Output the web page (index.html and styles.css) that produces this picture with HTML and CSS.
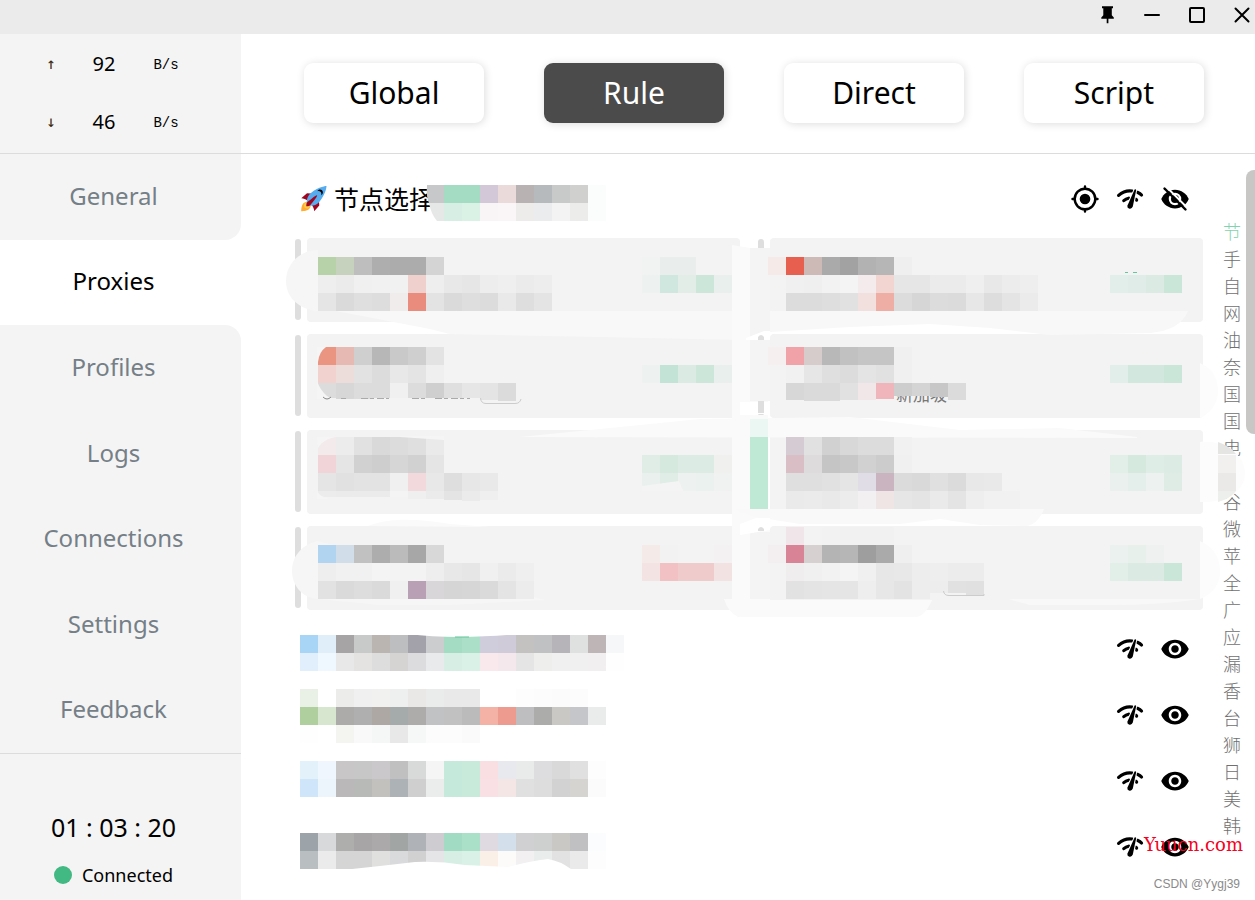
FILE: index.html
```html
<!DOCTYPE html>
<html lang="zh-CN">
<head>
    <meta charset="UTF-8">
    <title>Proxies</title>
    <link rel="stylesheet" href="styles.css">
</head>
<body>
    <svg class="symbols" aria-hidden="true">
        <symbol id="icon-speed" viewBox="0 0 30 30">
            <g fill="none" stroke="currentColor" stroke-width="3.2" stroke-linecap="round">
                <path d="M3.6 11.4C7.4 8 12.4 6.2 17.2 7"/>
                <path d="M22.4 8.3C24 9 25.5 9.8 26.5 11"/>
                <path d="M8.8 16.6C10.4 15.2 12 14.5 13.6 14.2"/>
                <path d="M20.8 15.2L21.6 16"/>
            </g>
            <path d="M19.4 5.2L12.8 20" stroke="#fff" stroke-width="1.4"/>
            <path d="M21.6 5.2L18.8 20" stroke="#fff" stroke-width="1.4"/>
            <path d="M19.6 5.6Q20.6 4.6 21.2 6L17.8 22.6Q17 25 14.6 24.7Q12 24 12.5 21.4Z" fill="currentColor"/>
        </symbol>
        <symbol id="icon-eye" viewBox="0 0 24 24">
            <path fill="currentColor" d="M12 4.5C7 4.5 2.73 7.61 1 12c1.73 4.39 6 7.5 11 7.5s9.27-3.11 11-7.5c-1.73-4.39-6-7.5-11-7.5zM12 17c-2.76 0-5-2.24-5-5s2.24-5 5-5 5 2.24 5 5-2.24 5-5 5zm0-8c-1.66 0-3 1.34-3 3s1.34 3 3 3 3-1.34 3-3-1.34-3-3-3z"/>
        </symbol>
    </svg>

    <header class="titlebar">
        <button class="window-btn" aria-label="Pin">
            <svg viewBox="0 0 24 24"><path d="M7 3.2h11v2h-1.2v7l2 2.3v1.3h-5.4v4.4h-1.700v-4.400H6.300v-1.300l2-2.300v-7H7z"/></svg>
        </button>
        <button class="window-btn" aria-label="Minimize">
            <svg viewBox="0 0 24 24"><path class="line" d="M5 12h14"/></svg>
        </button>
        <button class="window-btn" aria-label="Maximize">
            <svg viewBox="0 0 24 24"><rect class="line" x="5" y="5" width="14" height="14" rx="1"/></svg>
        </button>
        <button class="window-btn" aria-label="Close">
            <svg viewBox="0 0 24 24"><path class="line" d="M5.500 5.500l13 13M18.500 5.500l-13 13"/></svg>
        </button>
    </header>

    <div class="app">
        <aside class="sidebar">
            <div class="traffic">
                <div class="traffic-row"><span class="arrow">↑</span><span class="speed">92</span><span class="unit">B/s</span></div>
                <div class="traffic-row"><span class="arrow">↓</span><span class="speed">46</span><span class="unit">B/s</span></div>
            </div>
            <nav class="menu">
                <a class="menu-item before-active" href="#general">General</a>
                <a class="menu-item active" href="#proxies">Proxies</a>
                <a class="menu-item after-active" href="#profiles">Profiles</a>
                <a class="menu-item" href="#logs">Logs</a>
                <a class="menu-item" href="#connections">Connections</a>
                <a class="menu-item" href="#settings">Settings</a>
                <a class="menu-item" href="#feedback">Feedback</a>
            </nav>
            <div class="status">
                <div class="uptime">01 : 03 : 20</div>
                <div class="connection"><span class="dot"></span>Connected</div>
            </div>
        </aside>

        <main class="main">
            <div class="modes">
                <button class="mode">Global</button>
                <button class="mode selected">Rule</button>
                <button class="mode">Direct</button>
                <button class="mode">Script</button>
            </div>

            <div class="content">
                <div class="groups">
                    <section class="group">
                        <div class="group-header first">
                            <h2 class="group-name">
                                <svg class="rocket" viewBox="0 0 36 36" aria-hidden="true">
                                    <path fill="#a0041e" d="M1 17l8-7 16 1 1 16-7 8s.001-5.999-6-12-12-6-12-6z"/>
                                    <path fill="#ffac33" d="M.973 35s-.036-7.979 2.985-11S15 21.187 15 21.187 14.999 29 11.999 32c-3 3-11.026 3-11.026 3z"/>
                                    <circle fill="#ffcc4d" cx="8.999" cy="27" r="4"/>
                                    <path fill="#55acee" d="M35.999 0s-10 0-22 10c-6 5-6 14-4 16s11 2 16-4c10-12 10-22 10-22z"/>
                                    <path d="M26.999 5c-1.623 0-3.013.971-3.641 2.360.502-.227 1.055-.360 1.641-.360 2.209 0 4 1.791 4 4 0 .586-.133 1.139-.359 1.640 1.389-.627 2.359-2.017 2.359-3.640 0-2.209-1.791-4-4-4z"/>
                                    <path fill="#a0041e" d="M8 28s0-4 1-5 13.001-10.999 14-10-9.001 13-10.001 14S8 28 8 28z"/>
                                </svg>
                                <span>节点选择</span>
                            </h2>
                            <div class="actions">
                                <button class="icon-btn" aria-label="Locate">
                                    <svg viewBox="0 0 30 30"><g fill="none" stroke="currentColor" stroke-width="2.400" stroke-linecap="round"><circle cx="15" cy="15" r="10.300"/><path d="M15 2.500v2M15 25.500v2M2.500 15h2M25.500 15h2"/></g><circle cx="15" cy="15" r="5.300"/></svg>
                                </button>
                                <button class="icon-btn" aria-label="Test speed"><svg><use href="#icon-speed"/></svg></button>
                                <button class="icon-btn" aria-label="Collapse">
                                    <svg viewBox="0 0 30 30">
                                        <g transform="scale(1.250)"><path d="M12 4.500C7 4.500 2.730 7.610 1 12c1.730 4.390 6 7.500 11 7.500s9.270-3.110 11-7.500c-1.730-4.390-6-7.500-11-7.500z"/><circle cx="12" cy="12" r="4.100" fill="none" stroke="#fff" stroke-width="1.800"/></g>
                                        <path d="M6 2.500l21 21" stroke="#fff" stroke-width="2"/>
                                        <path d="M4.500 4.500l21 21" stroke="currentColor" stroke-width="2.400" stroke-linecap="round"/>
                                    </svg>
                                </button>
                            </div>
                        </div>
                        <div class="nodes">
                            <div class="node"><button class="card" aria-label="Node 1"></button></div>
                            <div class="node"><button class="card" aria-label="Node 2"></button></div>
                            <div class="node"><button class="card" aria-label="Node 3"></button></div>
                            <div class="node"><button class="card" aria-label="Node 4"></button></div>
                            <div class="node"><button class="card" aria-label="Node 5"></button></div>
                            <div class="node"><button class="card" aria-label="Node 6"></button></div>
                            <div class="node"><button class="card" aria-label="Node 7"></button></div>
                            <div class="node"><button class="card" aria-label="Node 8"></button></div>
                        </div>
                    </section>
                    <section class="group-header">
                        <div class="actions">
                            <button class="icon-btn" aria-label="Test speed"><svg><use href="#icon-speed"/></svg></button>
                            <button class="icon-btn" aria-label="Expand"><svg><use href="#icon-eye"/></svg></button>
                        </div>
                    </section>
                    <section class="group-header">
                        <div class="actions">
                            <button class="icon-btn" aria-label="Test speed"><svg><use href="#icon-speed"/></svg></button>
                            <button class="icon-btn" aria-label="Expand"><svg><use href="#icon-eye"/></svg></button>
                        </div>
                    </section>
                    <section class="group-header">
                        <div class="actions">
                            <button class="icon-btn" aria-label="Test speed"><svg><use href="#icon-speed"/></svg></button>
                            <button class="icon-btn" aria-label="Expand"><svg><use href="#icon-eye"/></svg></button>
                        </div>
                    </section>
                    <section class="group-header">
                        <div class="actions">
                            <button class="icon-btn" aria-label="Test speed"><svg><use href="#icon-speed"/></svg></button>
                            <button class="icon-btn" aria-label="Expand"><svg><use href="#icon-eye"/></svg></button>
                        </div>
                    </section>
                </div>
                <ul class="index">
                    <li class="current">节</li><li>手</li><li>自</li><li>网</li><li>油</li><li>奈</li><li>国</li><li>国</li><li>电</li><li></li><li>谷</li><li>微</li><li>苹</li><li>全</li><li>广</li><li>应</li><li>漏</li><li>香</li><li>台</li><li>狮</li><li>日</li><li>美</li><li>韩</li>
                </ul>
                <div class="scrollbar"></div>
            </div>
        </main>
    </div>

    <!-- mosaic laid over the private node names -->
    <svg class="mosaic" width="1255" height="900" aria-hidden="true">
        <g>
            <path fill="#f6f6f6" d="M318 250C300 250 286 264 286 281C286 298 300 310 318 311Z"/>
            <path fill="#f8f8f8" d="M336 311H1188C1182 325 1170 331 1150 333L1050 335L990 328L930 324L850 327L770 332L740 340L600 337L450 334L430 329Z"/>
            <path fill="#f6f6f6" d="M318 541C300 545 292 558 292 571C292 585 302 598 318 599L380 605H450L545 600Z"/>
            <path fill="#fafafa" d="M368 526C390 517 420 519 450 524L490 527Z"/>
            <path fill="#fafafa" d="M520 437L700 419L850 417L960 430L1060 428L1137 437V438Z"/>
            <path fill="#fafafa" d="M732 245L750 248H768V402H740V415H768V528L732 536Z"/>
            <path fill="#f4f4f4" d="M750 248H770V401H750Z"/>
            <path fill="#f9f9f9" d="M732 509H1044Q1037 526 1025 526L980 525L940 519L900 524H800L755 517Z"/>
            <path fill="#fafafa" d="M732 535L770 530V600H932Q925 617 915 617H738Q728 612 724 599H732Z"/>
            <path fill="#f4f4f4" d="M750 532H770V599H750Z"/>
            <path fill="#f8f8f8" d="M1008 599H1200Q1160 605 1110 605H1030Z"/>
            <path fill="#fcfcfc" d="M1200 363C1213 369 1218 379 1218 391C1218 403 1211 413 1200 418ZM1200 442C1224 440 1245 454 1245 473C1245 490 1228 503 1200 502ZM1200 541C1214 547 1220 558 1220 571C1220 584 1213 594 1200 599Z"/>
            <path fill="#fff" d="M740 402H770V414H740ZM746 338L764 331H770V340H746ZM740 524L756 518H770V530L740 535Z"/>
            <path fill="#dedede" d="M758 401H764V413H758ZM758 242H764V248H758ZM758 340V337Q761 333 764 337V340ZM758 531V529Q761 525 764 529V531Z"/>
            <text class="node-remark" x="896" y="401">新加坡-</text>
        </g>
        <g id="cells"></g>
        <g>
            <path fill="#c6c8ca" d="M427 185H444V203H429Q426 197 427 185Z"/>
            <path fill="#e6e8e7" d="M429 203H444V221H437Q431 214 429 203Z"/>
            <path fill="#f5f5f5" d="M317 347H326Q319 352 318 362L317 363ZM317 381Q320 390 327 396L332 399H317Z"/>
            <path fill="#f5f5f5" d="M317 437H335Q322 440 318 448ZM317 491Q320 497 330 499H317ZM400 437L444 440V436H400Z"/>
            <path fill="#f4f4f4" d="M642 486L679 481L683 491H642Z"/>
            <path fill="#fff" d="M408 634Q455 640 520 634ZM352 869L380 866L415 862Q440 861 465 865L508 867Q530 861 548 859Q560 861 571 869Z"/>
            <path stroke="#65c59b" d="M455 637H469M1125 272.500H1128M1133 272.500H1137"/>
            <path fill="none" stroke="#888" d="M323 397Q327 401 331 397"/>
            <path stroke="#aaa" stroke-dasharray="7 2 4 3" d="M341 398.500H346M361 398.500H389M412 398.500H425M435 398.500H470"/>
            <path fill="none" stroke="#ccc" d="M480.500 398Q481 403.500 486 403.500H515Q520 403.500 521 399M943.500 591Q944 595.500 949 595.500H984V594"/>
            <path fill="#e5e5e4" d="M1218 442Q1230 446 1236 454H1218Z"/>
            <path fill="#f2f0ef" d="M1218 455H1236V473H1218Z"/>
            <path fill="#ebe9e8" d="M1218 473H1236V491H1218Z"/>
            <path fill="#edefec" d="M1218 491H1236Q1230 499 1218 502Z"/>
        </g>
    </svg>
    <div class="watermark">
        <span class="site">Yuucn.com</span>
        <span class="author">CSDN @Yygj39</span>
    </div>
    <script src="mosaic.js"></script>
</body>
</html>
```
FILE: styles.css
```css
* {
    box-sizing: border-box;
}

body {
    margin: 0;
    min-height: 100vh;
    display: flex;
    flex-direction: column;
    position: relative;
    overflow: hidden;
    background-color: #fff;
    color: #000;
    font-family: "Noto Sans", "Noto Sans CJK SC", sans-serif;
}

button {
    border: none;
    padding: 0;
    background: none;
    color: inherit;
    font-family: inherit;
    cursor: pointer;
}

.symbols {
    display: none;
}

.titlebar {
    height: 34px;
    padding: 0 1px 5px 0;
    display: flex;
    justify-content: flex-end;
    align-items: center;
    gap: 21px;
    background-color: #ebebeb;
}

.window-btn {
    width: 24px;
    height: 24px;
}

.window-btn svg {
    display: block;
    width: 24px;
    height: 24px;
}

.window-btn .line {
    fill: none;
    stroke: #000;
    stroke-width: 2;
    stroke-linecap: round;
}

.app {
    flex: 1;
    display: flex;
}

.sidebar {
    width: 241px;
    display: flex;
    flex-direction: column;
}

.traffic {
    height: 120px;
    padding-bottom: 2px;
    display: flex;
    flex-direction: column;
    background-color: #f4f4f4;
    border-bottom: 1px solid #dcdcdc;
}

.traffic-row {
    flex: 1;
    display: grid;
    grid-template-columns: 52px 54px 50px;
    padding-left: 25px;
    align-items: center;
    text-align: center;
}

.arrow {
    font-family: "DejaVu Sans Mono", monospace;
    font-size: 16px;
    color: #3a2a0c;
}

.speed {
    font-size: 20px;
}

.unit {
    padding: 3px 0 0 20px;
    font-family: "Liberation Mono", monospace;
    font-size: 14px;
}

.menu {
    flex: 1;
    display: flex;
    flex-direction: column;
    background-color: #fff;
}

.menu-item {
    flex: 1;
    display: flex;
    align-items: center;
    justify-content: center;
    padding: 0 14px 3px 0;
    background-color: #f4f4f4;
    color: #757f87;
    font-size: 24px;
    text-decoration: none;
}

.menu-item.active {
    background-color: #fff;
    color: #000;
}

.before-active {
    border-bottom-right-radius: 16px;
}

.after-active {
    border-top-right-radius: 16px;
}

.status {
    height: 147px;
    padding: 56px 14px 0 0;
    background-color: #f4f4f4;
    border-top: 1px solid #dcdcdc;
    text-align: center;
}

.uptime {
    font-size: 25px;
    line-height: 34px;
}

.connection {
    margin-top: 16px;
    display: flex;
    align-items: center;
    justify-content: center;
    gap: 10px;
    font-size: 18px;
    line-height: 30px;
}

.dot {
    width: 18px;
    height: 18px;
    border-radius: 50%;
    background-color: #42b883;
}

.main {
    flex: 1;
    display: flex;
    flex-direction: column;
}

.modes {
    height: 120px;
    padding: 29px 51px 30px 63px;
    display: grid;
    grid-template-columns: repeat(4, 1fr);
    gap: 60px;
    border-bottom: 1px solid #dcdcdc;
}

.mode {
    border-radius: 9px;
    background-color: #fff;
    box-shadow: 1px 1px 8px rgba(0, 0, 0, 0.14);
    font-size: 30px;
    line-height: 60px;
}

.mode.selected {
    background-color: #4b4b4b;
    color: #fff;
}

.content {
    flex: 1;
    display: flex;
    padding: 16px 0 0 54px;
}

.groups {
    flex: 1;
}

.group-header {
    height: 66px;
    padding: 0 13px 0 5px;
    display: flex;
    align-items: center;
    justify-content: flex-end;
}

.group-header.first {
    height: 58px;
    justify-content: space-between;
}

.group-name {
    margin: 0;
    display: flex;
    align-items: center;
    gap: 7px;
    font-size: 25px;
    font-weight: 400;
    font-family: "Noto Sans CJK SC", sans-serif;
}

.group-name span {
    padding-bottom: 3px;
}

.rocket {
    width: 27px;
    height: 26px;
}

.actions {
    display: flex;
    gap: 15px;
}

.icon-btn {
    width: 30px;
    height: 30px;
}

.icon-btn svg {
    display: block;
    width: 30px;
    height: 30px;
}

.nodes {
    display: grid;
    grid-template-columns: 1fr 1fr;
    gap: 12px 18px;
    margin: 10px 0 6px;
}

.node {
    height: 84px;
    display: flex;
    gap: 6px;
}

.node::before {
    content: "";
    width: 6px;
    margin: 1px 0 2px;
    border-radius: 3px;
    background-color: #dedede;
}

.card {
    flex: 1;
    border-radius: 4px;
    background-color: #f3f3f3;
}

.index {
    width: 18px;
    margin: 48px 5px 0 20px;
    padding: 0;
    list-style: none;
    color: #707070;
    font-family: "Noto Sans CJK SC", sans-serif;
    font-size: 18px;
    font-weight: 300;
    line-height: 27px;
}

.index li {
    height: 27px;
}

.index .current {
    color: #7fd3ae;
}

.scrollbar {
    width: 9px;
    height: 264px;
    border-radius: 8px 0 0 8px;
    background-color: #c8c7c6;
}

.mosaic {
    position: absolute;
    top: 0;
    left: 0;
    pointer-events: none;
}

.node-remark {
    fill: #777;
    font-family: "Noto Sans CJK SC", sans-serif;
    font-size: 17px;
}

.watermark {
    position: absolute;
    right: 12px;
    bottom: 6px;
    display: flex;
    flex-direction: column;
    align-items: flex-end;
    gap: 20px;
    pointer-events: none;
}

.site {
    color: #f5001d;
    font-family: "DejaVu Serif", serif;
    font-size: 18px;
    line-height: 18px;
}

.author {
    margin-right: 3px;
    color: #8a8a8a;
    font-family: "Liberation Sans", sans-serif;
    font-size: 12px;
    line-height: 20px;
}
```
FILE: mosaic.js
```js
const SIZE = 18;

// [x, y, colours]; two digits are a grey, "-" leaves a cell open
const rows = [
    [444, 185, "a4dbc3 a4dbc3 d3c8d7 ebdada b8b3b2 b6babd c8caca d0d0ce fbfdfc"],
    [444, 203, "d6eee4 daf1e6 f9f5f7 faf5f7 eeecea eaecee f4f3f4 ececea fbfdfc"],

    [318, 257, "b7d1a9 c6d1be be ae ac ac d4"],
    [318, 275, "ee eb f0 f1 f1 f0d0cd ee e8 e6 ed ef eb ed"],
    [318, 293, "e5 da df dd f0ecec e98c7d e3 da de dc e9 de e4"],
    [642, 257, "f1f3f2 e9eeec e9eeec"],
    [642, 275, "edf1ef cfe7de e2ede8 cce7da e8efec"],
    [768, 257, "f5eae8 e65f4f cdbab7 aa a2 b2 b6 ef"],
    [786, 275, "f0 ef f2 f4 f4ecec f2d4d0 e6 e6 eb eb ef e8 ec ee"],
    [786, 293, "dc dc de e1 f1e0de eeaea5 dc d6 dc db e7 dd e4 eb"],
    [1110, 275, "e2eee9 dfece7 dceae4 cae6d8"],

    [318, 347, "ea9482 e7b9b3 cf b7 c9 cf e3"],
    [318, 365, "f1d2cf ecdddb e2 dc e8 e4 ef"],
    [318, 383, "dc d7 dc dc f0 dc cf df e6 e4 db", [15, 16, 16, 15, 15, 15, 15, 15, 15, 17, 18]],
    [642, 365, "edf1ef c4e3d7 dbebe4 cce7da e9efed"],
    [768, 347, "f5eff0 f0a2a8 d6cccc b8 c1 c5 c5 f0"],
    [786, 365, "f1 e6 df dc e4 e1 f0"],
    [786, 383, "d7 da da e1 f1e7e8 f0b5bb cd d4 c7 db", [17, 18, 18, 17, 17, 16, 13, 13, 14, 17]],
    [1110, 365, "e2eee9 d2e8df d2e8df cae6d8"],

    [750, 419, "ebf7f2"],
    [318, 437, "f3ebeb ec e1 d9 dc df ea"],
    [318, 455, "f1d4d8 e5 d1 ce d6 d1 e5"],
    [318, 473, "e5 e1 e3 e3 f0 f1d9dc e8 de e7 e9"],
    [318, 491, "ec eb eb eb f4 ef eb e4 eb ef", [6, 6, 6, 6, 6, 8, 8, 9, 10, 9]],
    [642, 455, "e0ede7 d5e9df dcebe4 dcebe4 f0f1ee"],
    [642, 473, "e9f0ed e0ede7 edf1ef ebf1ef f0f2f1"],
    [750, 437, "bfe8d5"],
    [750, 455, "bfe8d5"],
    [750, 473, "bfe8d5"],
    [750, 491, "bfe8d5"],
    [786, 437, "d5cbd2 e1 d1 d8 dc dc f1"],
    [786, 455, "d9bfc5 dddbdb c5 c8 d1 cc f0"],
    [786, 473, "df df e1 e5 e0dde6 c9b4c0 db d9 e0 db e8 e9"],
    [786, 491, "ea eb e9 ec f2f0f1 f0e5e5 e6 e4 ea e4 ee f1 f1"],
    [1110, 455, "e2eee8 d6e9df deede5 dcece4"],
    [1110, 473, "eaf0ee e4eeea edf1ef deece5"],

    [318, 545, "b1d5f1 d1deea c1 ad bb a7 d8"],
    [318, 563, "ee f1 f1 f4 f3 f3 ee e8 e6 f0 eb ef"],
    [318, 581, "e2 da dd da f0 baa0b5 d9d6da d5 d6 da e4 ec"],
    [642, 545, "f4ebe9 f1f2f1 - - f3f1f1"],
    [642, 563, "f3e4e3 f1c1c3 f0cbcc f0cbcc f2e3e2"],
    [786, 527, "f0e5e9 f3 f2 f1 f1 f1"],
    [768, 545, "f3eff1 d88496 d6d0d1 b4 b6 9e aa ef"],
    [786, 563, "f0edee f0 f2 f4 f0 e7 e8 ed ee ec ec"],
    [786, 581, "e2 e4 e5 e5 ee e7 e3 ed ed e1 e0", [18, 18, 18, 18, 18, 18, 18, 18, 12, 12, 14]],
    [1110, 545, "ebf1ee e8f0ec eff1f0"],
    [1110, 563, "e2eee8 dbebe4 dbebe4 cae6d8"],

    [300, 635, "a8d5f5 dfeef9 a6a4a5 c8caca bab5b0 bcbec0 a3a2aa cccdcf a3dbc3 abdfc8 cfccdc cfcbd8 c3c2c0 bfc1c3 b6b4b8 dfe1e0 beb6b6 f6f7f9"],
    [300, 653, "e0effb eff7ff e8 e5e3e1 dd d5d4d3 dcdcde e8eaec d6eee4 daf1e7 fae9ec f5e8ec e5 eeeeec f0 f0 f2eff1 fe"],
    [300, 689, "e9f1e6 - ececea f0 f1f1ef eef0ef eae8e7 eaeceb e9 e9 - - fd fc fb fc"],
    [300, 707, "afcf9e d6e6cf acaba9 afafb0 aea8a4 a5aaaa adacaa c1c2c4 c1 bb f3b2a5 ee9b8f bebec0 acacaa c9c8c4 c5c6c9 eaeceb"],
    [300, 725, "fe - f4f4f1 f9 f4f7f6 e9e8e8 f5f8f7 fc fc fa"],
    [300, 761, "e3f1fa eff6fd c9c6c7 c8c7c8 cac8cb c0c0c1 d8dad9 f5 c5e9da c8eada f9dfe2 e8e8ef e8ebe9 dddde0 dad9da e0e0e1 fd"],
    [300, 779, "cfe6fa edf5fc bbb8b9 b8bab8 c3c1be adb2b6 cecfce ebedec c5e9da c8eada f9e0e4 f5e6e6 e0 dd d2 d5d4d1 fb"],
    [300, 833, "9da4a9 d8d9db aeafac a7a5a6 aba9aa a1a5a3 afb3b7 ceccd0 a2dbc3 aadfc8 dfd9e1 d3e0eb d0d0d2 ced0cf cac8c5 c0bfc1 fafcfe"],
    [300, 851, "b9bec1 eb d5 d5 e0e0df d9dadc d1 e5e5e8 d6eee4 daf1e7 fbf0e8 fdfbf9 f2f0f1 e9edeb e2 ea fd"]
];

const cells = document.getElementById("cells");

rows.forEach(([x, y, colours, heights]) => {
    colours.split(" ").forEach((colour, i) => {
        if (colour === "-") return;
        const rect = document.createElementNS("http://www.w3.org/2000/svg", "rect");
        rect.setAttribute("x", x + i * SIZE);
        rect.setAttribute("y", y);
        rect.setAttribute("width", SIZE);
        rect.setAttribute("height", heights ? heights[i] : SIZE);
        rect.setAttribute("fill", "#" + (colour.length === 2 ? colour.repeat(3) : colour));
        cells.appendChild(rect);
    });
});
```
